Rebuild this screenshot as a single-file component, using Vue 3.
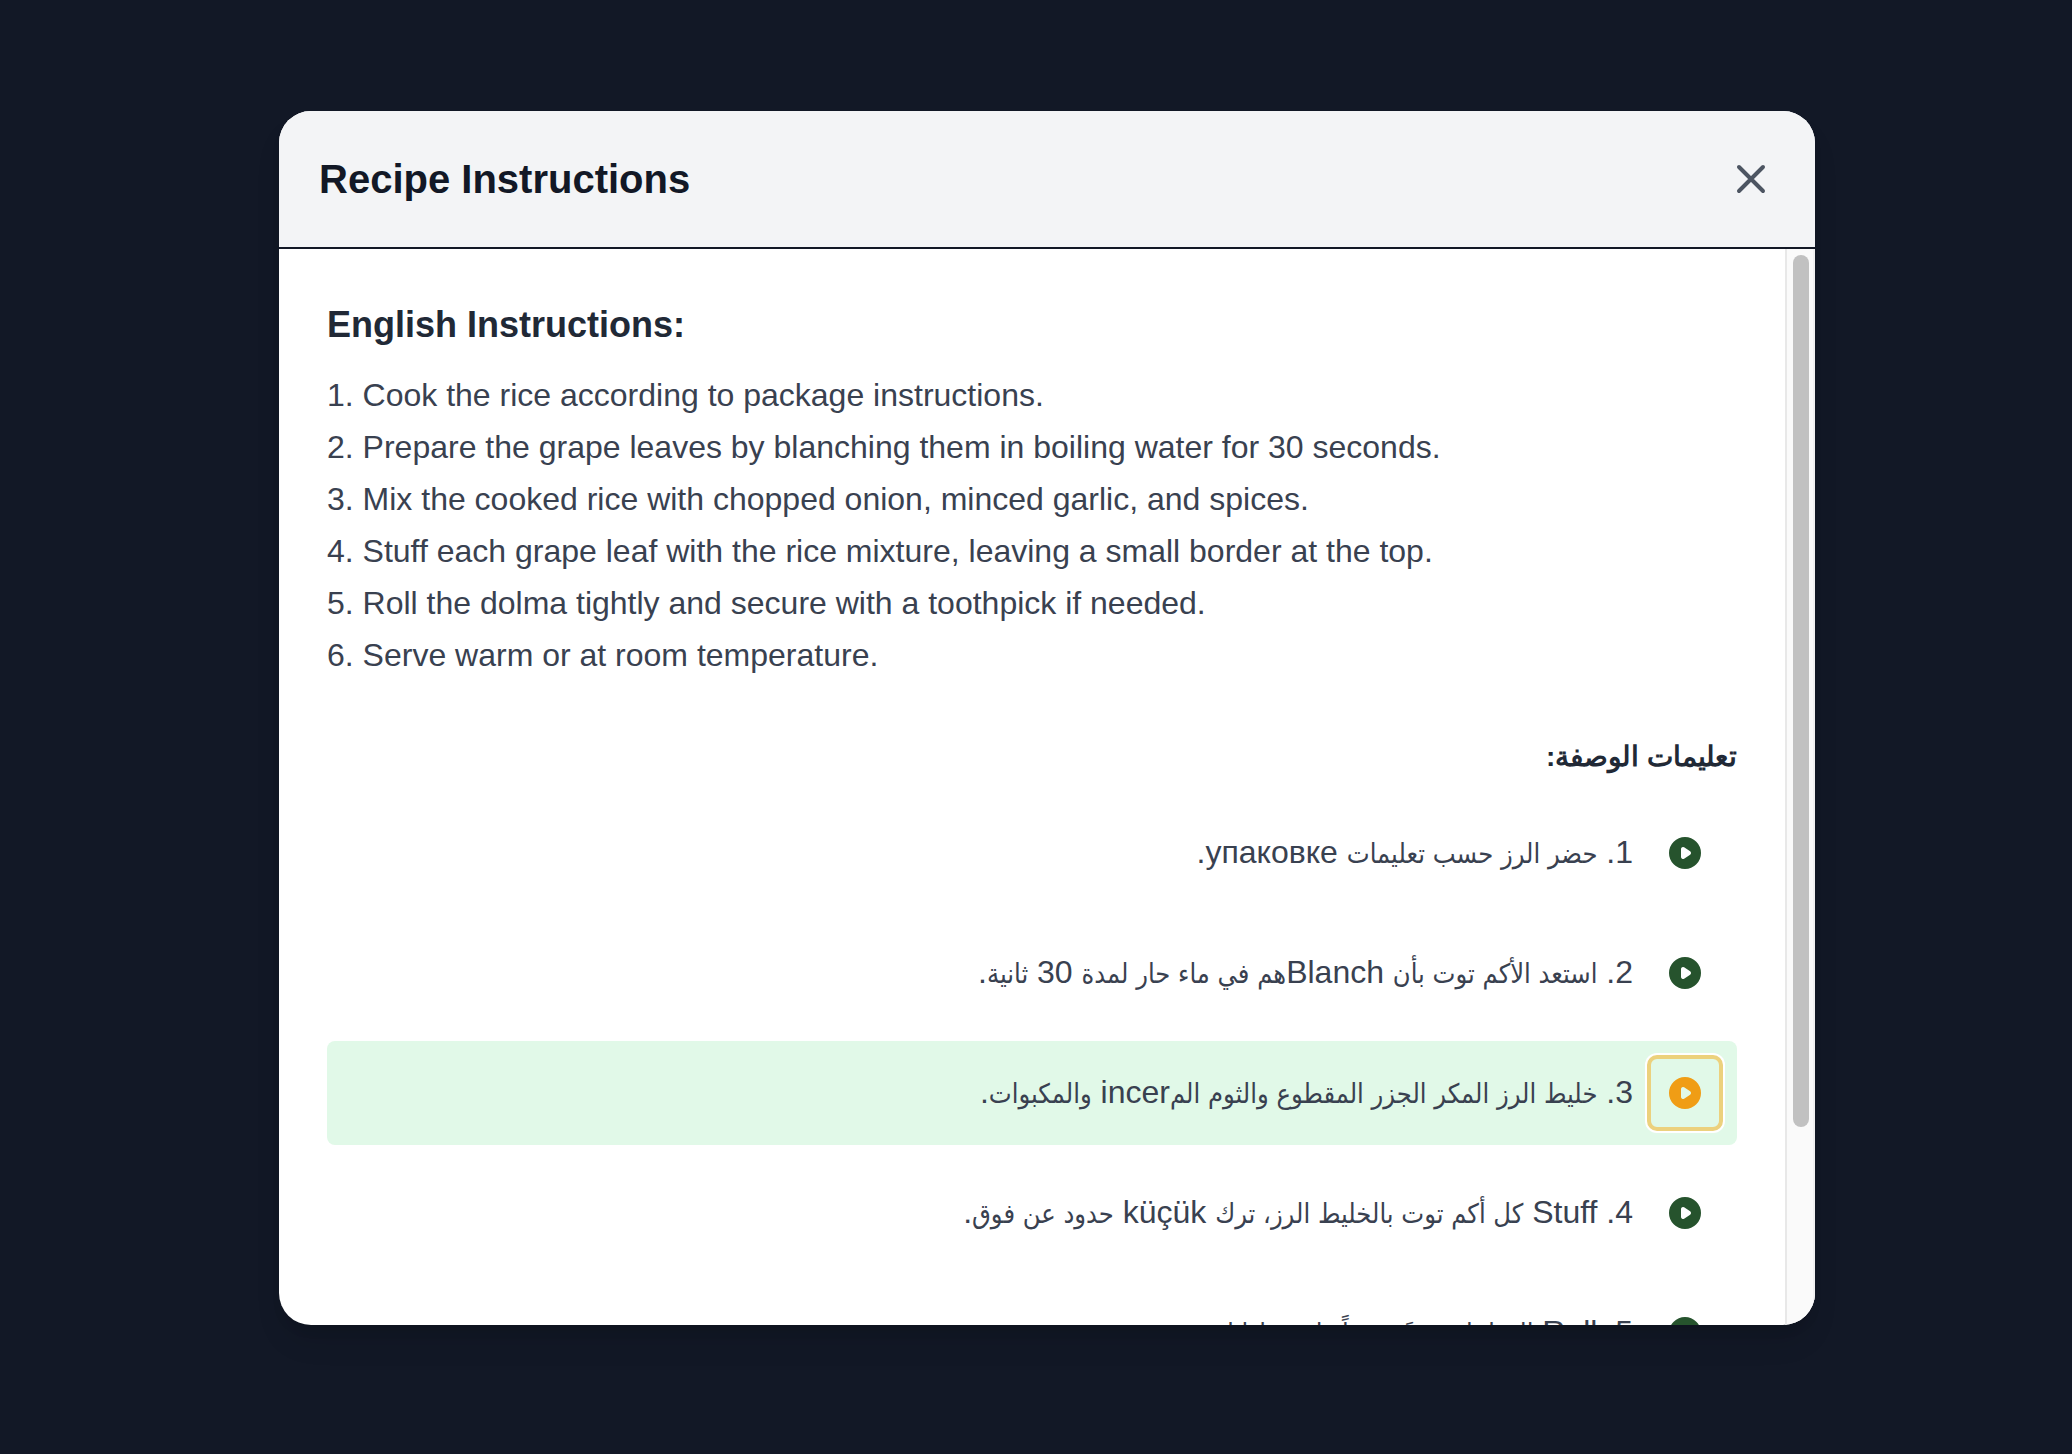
<script setup>
import { ref } from 'vue'

const activeStep = ref(3)

const english = [
  '1. Cook the rice according to package instructions.',
  '2. Prepare the grape leaves by blanching them in boiling water for 30 seconds.',
  '3. Mix the cooked rice with chopped onion, minced garlic, and spices.',
  '4. Stuff each grape leaf with the rice mixture, leaving a small border at the top.',
  '5. Roll the dolma tightly and secure with a toothpick if needed.',
  '6. Serve warm or at room temperature.',
]

const arabic = [
  '1. حضر الرز حسب تعليمات упаковке.',
  '2. استعد الأكم توت بأن Blanchهم في ماء حار لمدة 30 ثانية.',
  '3. خليط الرز المكر الجزر المقطوع والثوم المincer والمكبوات.',
  '4. Stuff كل أكم توت بالخليط الرز، ترك küçük حدود عن فوق.',
  '5. Roll الدولما دقيقةً وسماً واحمه إذا لزم.',
]

// Odd entries of the result are runs of Arabic words, even ones everything else.
const runs = (line) => line.split(/([\u0600-\u06FF]+(?:\s+[\u0600-\u06FF]+)*)/)
</script>

<template>
  <main class="backdrop">
    <section class="modal" role="dialog" aria-labelledby="modal-title">
      <header class="modal-header">
        <h1 id="modal-title">Recipe Instructions</h1>
        <button class="close" type="button" aria-label="Close">
          <svg viewBox="0 0 24 24" fill="none" stroke="currentColor" stroke-width="2" stroke-linecap="round" stroke-linejoin="round">
            <path d="M6 18L18 6M6 6l12 12" />
          </svg>
        </button>
      </header>
      <div class="modal-body">
        <div class="content">
          <h2>English Instructions:</h2>
          <div class="english">
            <p v-for="line in english" :key="line">{{ line }}</p>
          </div>
          <div dir="rtl" lang="ar">
            <h2 class="arabic-title">تعليمات الوصفة:</h2>
            <ul class="steps">
              <li v-for="(line, i) in arabic" :key="line" :class="{ active: activeStep === i + 1 }">
                <button class="play" type="button" :aria-label="'Play step ' + (i + 1)" @click="activeStep = i + 1">
                  <svg viewBox="0 0 20 20" fill="currentColor">
                    <path fill-rule="evenodd" clip-rule="evenodd" d="M10 18a8 8 0 100-16 8 8 0 000 16zM9.555 7.168A1 1 0 008 8v4a1 1 0 001.555.832l3-2a1 1 0 000-1.664l-3-2z" />
                  </svg>
                </button>
                <p><span v-for="(run, j) in runs(line)" :key="j" :class="{ arabic: j % 2 === 1 }">{{ run }}</span></p>
              </li>
            </ul>
          </div>
        </div>
        <div class="track" aria-hidden="true">
          <div class="thumb"></div>
        </div>
      </div>
    </section>
  </main>
</template>

<style>
body {
  margin: 0;
  background: #121826;
}
</style>

<style scoped>
* {
  box-sizing: border-box;
  margin: 0;
  padding: 0;
}
.backdrop {
  display: flex;
  justify-content: center;
  align-items: center;
  height: 100vh;
  padding: 111px 257px 129px 279px;
  background: #121826;
  font-family: "Liberation Sans", Arial, sans-serif;
}
.modal {
  display: flex;
  flex-direction: column;
  width: 100%;
  height: 100%;
  overflow: hidden;
  border-radius: 32px;
  background: #fff;
  box-shadow: 0 20px 30px -6px rgba(0, 0, 0, 0.12), 0 8px 12px -4px rgba(0, 0, 0, 0.1);
}
.modal-header {
  display: flex;
  justify-content: space-between;
  align-items: center;
  flex: none;
  padding: 40px;
  border-bottom: 2px solid #121826;
  background: #f3f4f6;
}
h1 {
  font-size: 40px;
  line-height: 56px;
  color: #121826;
}
button {
  border: 0;
  background: none;
  cursor: pointer;
}
svg {
  display: block;
}
.close {
  color: #4d5562;
}
.close svg {
  width: 48px;
  height: 48px;
}
.modal-body {
  display: flex;
  flex: 1;
  min-height: 0;
}
.content {
  flex: 1;
  overflow-y: auto;
  scrollbar-width: none;
  padding: 48px;
}
.track {
  flex: none;
  width: 30px;
  padding: 6px 4px 6px 6px;
  border: solid #e8e8e8;
  border-width: 0 2px;
  border-right-color: #f1f1f1;
  background: #fafafa;
}
.thumb {
  height: 82%;
  border-radius: 8px;
  background: #c1c1c1;
}
h2 {
  margin-bottom: 16px;
  font-size: 36px;
  line-height: 56px;
  color: #212936;
}
.english {
  margin-bottom: 48px;
}
.english p,
.steps {
  font-size: 32px;
  line-height: 52px;
  color: #394150;
}
.steps {
  display: flex;
  flex-direction: column;
  gap: 16px;
  list-style: none;
}
.steps li {
  display: flex;
  align-items: center;
  gap: 16px;
  padding: 16px;
  border-radius: 8px;
}
.steps li.active {
  background: #e1f9e8;
}
.arabic {
  font-family: "DejaVu Sans Condensed", "DejaVu Sans", sans-serif;
  font-size: 27px;
}
.arabic-title {
  font-size: 28px;
}
.play {
  padding: 16px;
  border-radius: 8px;
  color: #26532d;
}
.play svg {
  width: 40px;
  height: 40px;
}
.active .play {
  color: #f09d15;
  outline: 4px solid #ecd17d;
  outline-offset: -2px;
  box-shadow: 0 0 0 4px #fff;
}
</style>
